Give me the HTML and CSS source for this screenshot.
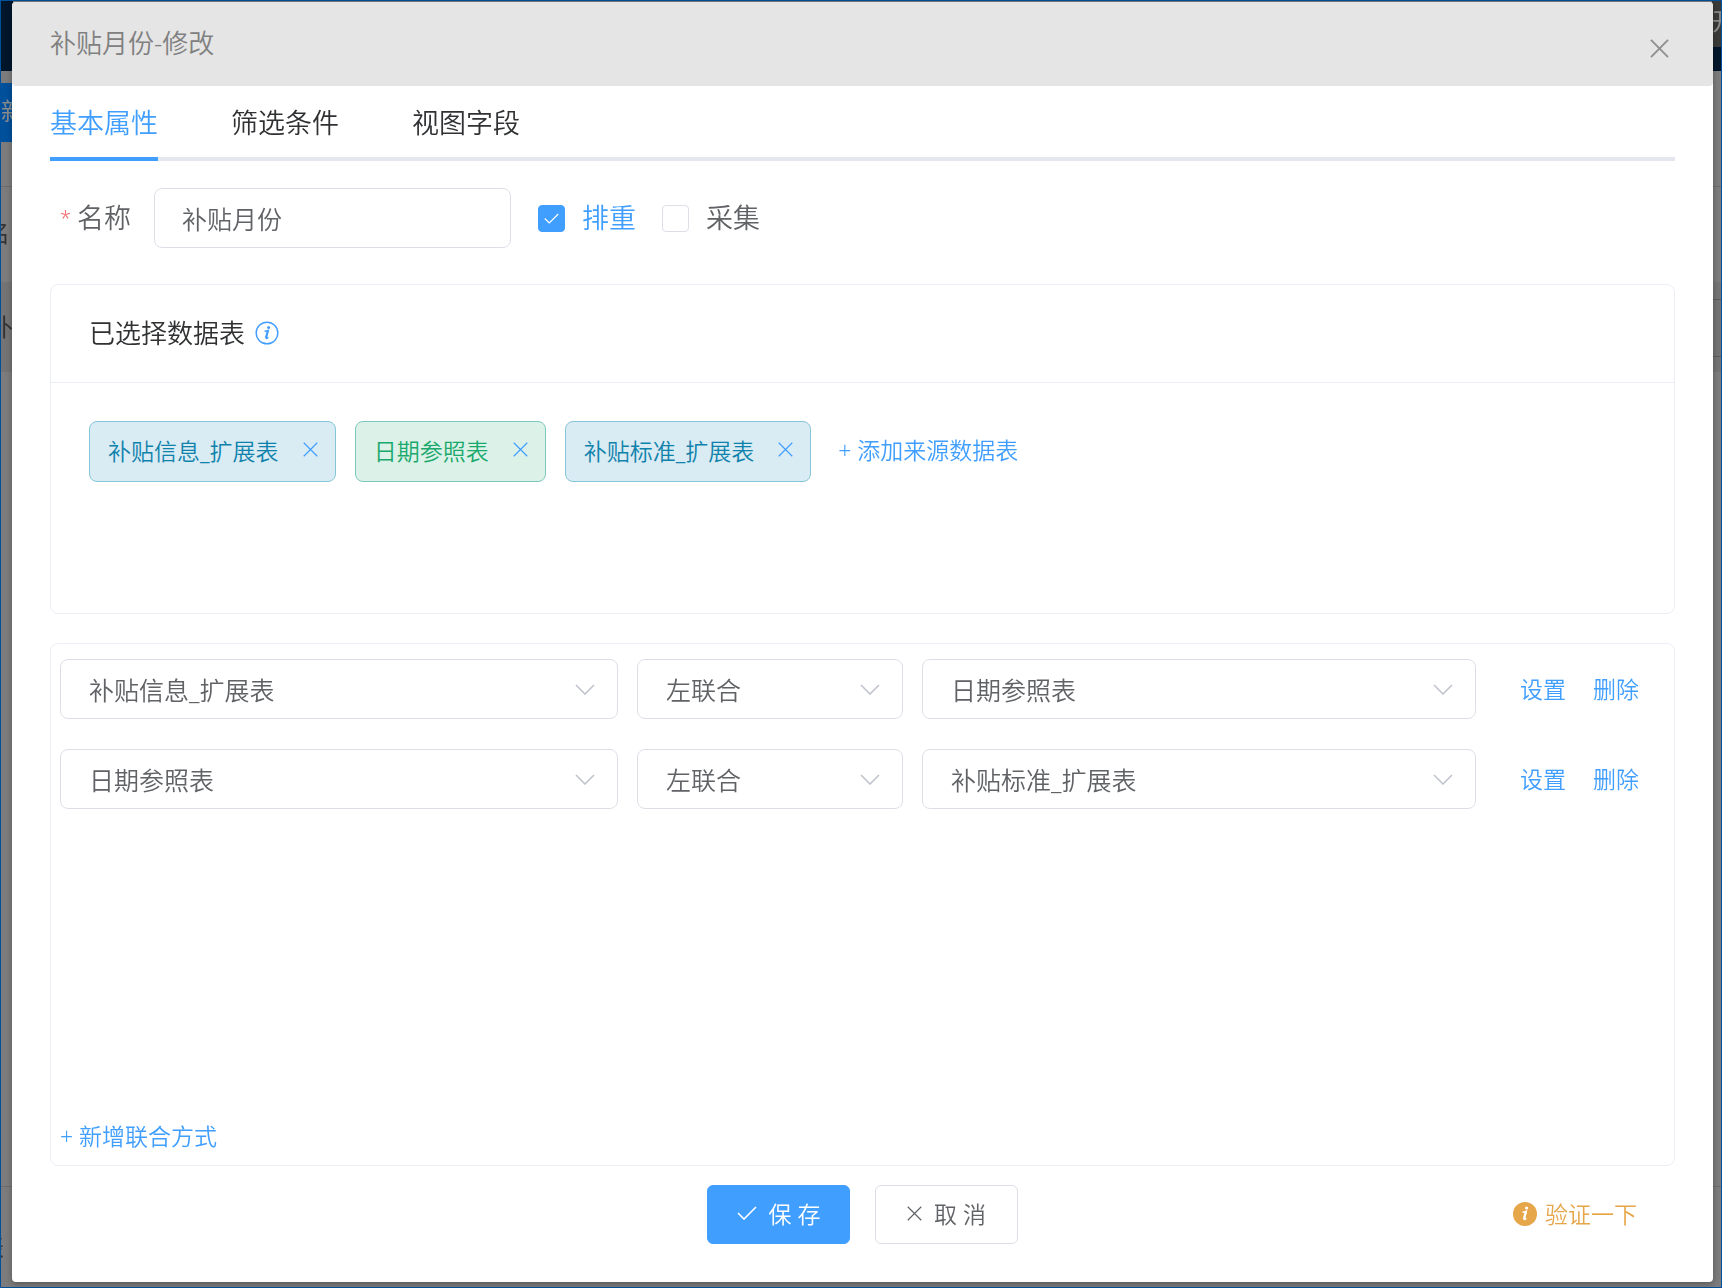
FILE: index.html
```html
<!DOCTYPE html>
<html lang="zh-CN">
<head>
<meta charset="utf-8">
<meta name="viewport" content="width=device-width, initial-scale=1">
<title>补贴月份-修改</title>
<link rel="stylesheet" href="styles.css">
</head>
<body>
<svg class="sprite" aria-hidden="true">
  <symbol id="i-close" viewBox="0 0 20 20"><path d="M1 1 19 19M19 1 1 19"/></symbol>
  <symbol id="i-check" viewBox="0 0 20 14"><path d="M1 7 7 13 19 1"/></symbol>
  <symbol id="i-down" viewBox="0 0 20 11"><path d="M1 1 10 10 19 1"/></symbol>
</svg>

<div class="backdrop" aria-hidden="true">
  <div class="rail">
    <div class="rail-nav"></div>
    <div class="rail-gap"></div>
    <div class="rail-new">新</div>
    <div class="rail-tools"></div>
    <div class="rail-field">名</div>
    <div class="rail-row">补</div>
    <div class="rail-list"></div>
    <div class="rail-foot">表</div>
  </div>
  <div class="rail rail-right">
    <div class="rail-user">开</div>
    <div class="rail-nav rail-nav-short"></div>
    <div class="rail-gap rail-gap-tall"></div>
    <div class="rail-tools"></div>
    <div class="rail-field"></div>
    <div class="rail-row rail-row-lined"></div>
    <div class="rail-list"></div>
    <div class="rail-foot"></div>
  </div>
</div>

<div class="overlay">
  <main class="dialog" role="dialog" aria-labelledby="dialog-title">
    <header class="dialog-header">
      <h1 class="dialog-title" id="dialog-title">补贴月份-修改</h1>
      <button class="icon-button dialog-close" type="button" aria-label="关闭"><svg class="icon icon-close-lg"><use href="#i-close"/></svg></button>
    </header>

    <div class="dialog-body">
      <nav class="tabs">
        <a class="tab tab-active" href="#basic">基本属性</a>
        <a class="tab" href="#filter">筛选条件</a>
        <a class="tab" href="#fields">视图字段</a>
      </nav>

      <div class="form-row">
        <label class="form-label" for="name"><span class="required">*</span>名称</label>
        <input class="text-input" id="name" type="text" value="补贴月份">
        <label class="check check-on"><span class="check-control"><input class="check-box" type="checkbox" checked><svg class="icon check-mark"><use href="#i-check"/></svg></span>排重</label>
        <label class="check"><span class="check-control"><input class="check-box" type="checkbox"></span>采集</label>
      </div>

      <section class="card">
        <div class="card-header">
          <h2 class="card-title">已选择数据表</h2>
          <svg class="info-icon" viewBox="0 0 24 24"><circle cx="12" cy="12" r="10.8" fill="none" stroke="#409eff" stroke-width="1.4"/><circle cx="13.6" cy="6.4" r="1.5" fill="#409eff"/><path d="M9.6 10.3c1.3-.2 2.5-.6 3.7-1L11.2 16.8c-.3 1.1.8.9 2.1-.6" fill="none" stroke="#409eff" stroke-width="1.4"/><path d="M12.9 9.6 10.9 17" stroke="#409eff" stroke-width="2"/></svg>
        </div>
        <div class="card-tags">
          <span class="tag tag-blue">补贴信息_扩展表<button class="icon-button" type="button" aria-label="移除"><svg class="icon icon-close"><use href="#i-close"/></svg></button></span>
          <span class="tag tag-green">日期参照表<button class="icon-button" type="button" aria-label="移除"><svg class="icon icon-close"><use href="#i-close"/></svg></button></span>
          <span class="tag tag-blue">补贴标准_扩展表<button class="icon-button" type="button" aria-label="移除"><svg class="icon icon-close"><use href="#i-close"/></svg></button></span>
          <button class="link add-source" type="button">+ 添加来源数据表</button>
        </div>
      </section>

      <section class="card joins">
        <div class="join-row">
          <div class="select"><select class="select-field" aria-label="左表"><option>补贴信息_扩展表</option></select><svg class="icon select-arrow"><use href="#i-down"/></svg></div>
          <div class="select"><select class="select-field" aria-label="联合方式"><option>左联合</option></select><svg class="icon select-arrow"><use href="#i-down"/></svg></div>
          <div class="select"><select class="select-field" aria-label="右表"><option>日期参照表</option></select><svg class="icon select-arrow"><use href="#i-down"/></svg></div>
          <div class="join-actions"><button class="link" type="button">设置</button><button class="link" type="button">删除</button></div>
        </div>
        <div class="join-row">
          <div class="select"><select class="select-field" aria-label="左表"><option>日期参照表</option></select><svg class="icon select-arrow"><use href="#i-down"/></svg></div>
          <div class="select"><select class="select-field" aria-label="联合方式"><option>左联合</option></select><svg class="icon select-arrow"><use href="#i-down"/></svg></div>
          <div class="select"><select class="select-field" aria-label="右表"><option>补贴标准_扩展表</option></select><svg class="icon select-arrow"><use href="#i-down"/></svg></div>
          <div class="join-actions"><button class="link" type="button">设置</button><button class="link" type="button">删除</button></div>
        </div>
        <button class="link add-join" type="button">+ 新增联合方式</button>
      </section>

      <footer class="dialog-footer">
        <div class="footer-main">
          <button class="button button-primary" type="button"><svg class="icon icon-check"><use href="#i-check"/></svg>保 存</button>
          <button class="button" type="button"><svg class="icon icon-close"><use href="#i-close"/></svg>取 消</button>
        </div>
        <button class="link verify" type="button"><svg class="info-icon" viewBox="0 0 24 24"><circle cx="12" cy="12" r="12" fill="#e6a64a"/><circle cx="13.6" cy="6" r="1.6" fill="#fff"/><path d="M9.6 10.2c1.3-.2 2.5-.6 3.7-1L11.2 16.8c-.3 1.1.8.9 2.1-.6" fill="none" stroke="#fff" stroke-width="1.5"/><path d="M12.9 9.6 10.9 17" stroke="#fff" stroke-width="2.2"/></svg>验证一下</button>
      </footer>
    </div>
  </main>
</div>
</body>
</html>
```
FILE: styles.css
```css
* {
  box-sizing: border-box;
}

body,
button,
input,
select {
  font-family: "Noto Sans", "Noto Sans CJK SC", sans-serif;
  font-weight: 350;
}

body {
  margin: 0;
  background: #7c7c7c;
  color: #606266;
}

button {
  padding: 0;
  border: 0;
  background: none;
  color: inherit;
  cursor: pointer;
}

h1,
h2 {
  margin: 0;
  font-weight: 350;
}

.sprite {
  display: none;
}

.icon {
  display: block;
  fill: none;
  stroke: currentColor;
  stroke-width: 1.6;
  overflow: visible;
}

.icon-close {
  width: 15px;
  height: 15px;
}

.icon-close-lg {
  width: 19px;
  height: 19px;
  stroke-width: 2;
}

.icon-check {
  width: 20px;
  height: 14px;
}

.info-icon {
  display: block;
  width: 24px;
  height: 24px;
}

.icon-button {
  display: block;
}

/* Page behind the dialog */
.backdrop {
  position: fixed;
  inset: 0;
  display: flex;
  justify-content: space-between;
  border: 1px solid #00509c;
}

.rail {
  display: flex;
  flex-direction: column;
  width: 12px;
  overflow: hidden;
  font-size: 24px;
  font-weight: 400;
  line-height: 28px;
}

.rail-right {
  width: 9px;
}

.rail-nav {
  height: 70px;
  background: #00162b;
}

.rail-nav-short {
  height: 24px;
}

.rail-gap {
  height: 12px;
}

.rail-gap-tall {
  height: 71px;
}

.rail-new {
  height: 59px;
  padding-top: 14px;
  background: #00509c;
  color: #8c8c8c;
}

.rail-tools {
  height: 45px;
  border-bottom: 1px solid #6c6c6c;
}

.rail-field {
  display: flex;
  align-items: center;
  justify-content: flex-end;
  height: 95px;
  padding: 0 3px 4px 0;
  color: #333;
}

.rail-row {
  display: flex;
  align-items: center;
  justify-content: flex-end;
  height: 90px;
  background: #747474;
  color: #333;
}

.rail-row-lined {
  background: linear-gradient(#5c5c5c, #5c5c5c) 0 17px / 100% 1px no-repeat, linear-gradient(#5c5c5c, #5c5c5c) 0 74px / 100% 1px no-repeat, #747474;
}

.rail-list {
  flex: 1;
  border-bottom: 1px solid #6c6c6c;
}

.rail-foot {
  display: flex;
  justify-content: flex-end;
  height: 100px;
  padding: 46px 9px 0 0;
  color: #333;
}

.rail-user {
  height: 46px;
  padding-top: 6px;
  background: #3a3a38;
  color: #8c8c8c;
}

/* Dialog */
.overlay {
  position: relative;
  display: flex;
  min-height: 100vh;
  padding: 2px 9px 6px 12px;
}

.dialog {
  display: flex;
  flex: 1;
  flex-direction: column;
  min-width: 0;
  border-radius: 4px;
  background: #fff;
  box-shadow: 0 2px 6px rgba(0, 0, 0, 0.3);
}

.dialog-header {
  display: flex;
  align-items: center;
  justify-content: space-between;
  height: 84px;
  padding: 0 44px 2px 38px;
  border-radius: 4px;
  background: #e5e5e5;
  color: #808080;
}

.dialog-title {
  font-size: 26px;
  line-height: 36px;
}

.dialog-close {
  padding-top: 10px;
  color: #909090;
}

.dialog-body {
  display: flex;
  flex: 1;
  flex-direction: column;
  padding: 0 38px;
}

.tabs {
  display: flex;
  gap: 73px;
  box-shadow: inset 0 -4px #e4e7ed;
}

.tab {
  height: 75px;
  border-bottom: 4px solid transparent;
  color: #303133;
  font-size: 27px;
  line-height: 73px;
  text-decoration: none;
}

.tab-active {
  border-color: #409eff;
  color: #409eff;
}

.form-row {
  display: flex;
  align-items: center;
  padding: 27px 0 36px 10px;
  font-size: 27px;
  line-height: 36px;
}

.form-label {
  display: flex;
  gap: 6px;
  margin-right: 23px;
}

.required {
  color: #f56c6c;
  font-size: 20px;
}

.text-input {
  width: 357px;
  height: 60px;
  margin-right: 27px;
  padding: 0 27px;
  border: 1px solid #dcdfe6;
  border-radius: 8px;
  background: #fff;
  color: #606266;
  font-size: 25px;
}

.check {
  display: flex;
  align-items: center;
  gap: 17px;
  margin-right: 26px;
}

.check-on {
  color: #409eff;
}

.check-control {
  display: grid;
  place-items: center;
}

.check-box {
  grid-area: 1 / 1;
  width: 27px;
  height: 27px;
  margin: 0;
  border: 1px solid #dcdfe6;
  border-radius: 4px;
  appearance: none;
  background: #fff;
}

.check-box:checked {
  border-color: #409eff;
  background: #409eff;
}

.check-mark {
  grid-area: 1 / 1;
  z-index: 1;
  width: 15px;
  height: 11px;
  color: #fff;
}

.card {
  border: 1px solid #ebeef5;
  border-radius: 8px;
}

.card-header {
  display: flex;
  align-items: center;
  gap: 10px;
  height: 98px;
  padding: 0 0 2px 38px;
  border-bottom: 1px solid #ebeef5;
}

.card-title {
  color: #303133;
  font-size: 26px;
  line-height: 36px;
}

.card-tags {
  display: flex;
  flex-wrap: wrap;
  align-items: flex-start;
  gap: 19px;
  min-height: 230px;
  padding: 38px;
}

.tag {
  display: flex;
  align-items: center;
  gap: 24px;
  height: 61px;
  padding: 0 17px 4px 18px;
  border: 1px solid;
  border-radius: 8px;
  font-size: 23px;
}

.tag .icon-button {
  color: #409eff;
}

.tag-blue {
  border-color: #84c5d6;
  background: #d9ebf3;
  color: #0f82ac;
}

.tag-green {
  border-color: #7cc7bd;
  background: #dcf2e8;
  color: #1aa96d;
}

.link {
  color: #409eff;
  font-size: 23px;
  line-height: 30px;
}

.add-source {
  height: 58px;
  margin-left: 8px;
}

.joins {
  display: flex;
  flex: 1;
  flex-direction: column;
  gap: 30px;
  margin-top: 29px;
  padding: 15px 9px 14px;
}

.join-row {
  display: grid;
  grid-template-columns: 558fr 266fr 554fr auto;
  gap: 19px;
}

.select {
  display: grid;
  align-items: center;
}

.select-field {
  grid-area: 1 / 1;
  width: 100%;
  height: 60px;
  padding: 2px 60px 0 28px;
  border: 1px solid #dcdfe6;
  border-radius: 8px;
  appearance: none;
  background: #fff;
  color: #606266;
  font-size: 25px;
}

.select-arrow {
  grid-area: 1 / 1;
  justify-self: end;
  width: 20px;
  height: 11px;
  margin-right: 23px;
  color: #c0c4cc;
  pointer-events: none;
}

.join-actions {
  display: flex;
  align-items: center;
  gap: 27px;
  padding: 0 26px 0 25px;
}

.add-join {
  align-self: flex-start;
  margin-top: auto;
}

.dialog-footer {
  display: grid;
  grid-template-columns: 1fr auto 1fr;
  align-items: center;
  padding: 19px 38px 38px;
}

.footer-main {
  display: flex;
  grid-column: 2;
  gap: 25px;
}

.button {
  display: flex;
  align-items: center;
  justify-content: center;
  gap: 12px;
  width: 143px;
  height: 59px;
  padding-bottom: 3px;
  border: 1px solid #dcdfe6;
  border-radius: 6px;
  background: #fff;
  font-size: 23px;
}

.button-primary {
  border-color: #409eff;
  background: #409eff;
  color: #fff;
}

.verify {
  display: flex;
  align-items: center;
  justify-self: end;
  gap: 8px;
  padding-bottom: 2px;
  color: #e6a64a;
}
```
